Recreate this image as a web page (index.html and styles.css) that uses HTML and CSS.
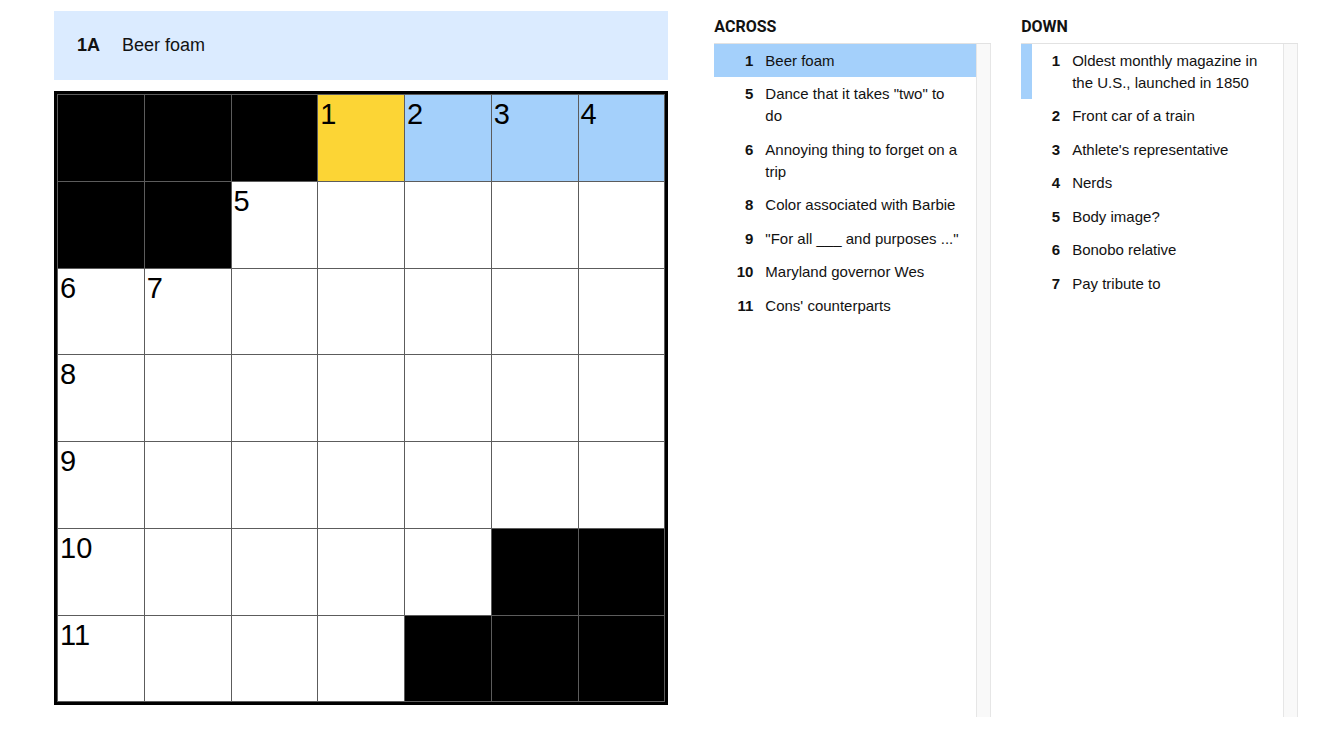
FILE: index.html
```
<!DOCTYPE html>
<html lang="en">
<head>
<meta charset="utf-8">
<meta name="viewport" content="width=device-width, initial-scale=1">
<title>Mini Crossword</title>
<link rel="stylesheet" href="styles.css">
</head>
<body>
<main class="game">
  <section class="puzzle">
    <div class="clue-bar"><span class="clue-bar-number">1A</span><span class="clue-bar-text">Beer foam</span></div>
    <div class="board">
      <div class="cell block"></div><div class="cell block"></div><div class="cell block"></div><button class="cell selected">1</button><button class="cell highlighted">2</button><button class="cell highlighted">3</button><button class="cell highlighted">4</button>
      <div class="cell block"></div><div class="cell block"></div><button class="cell">5</button><button class="cell"></button><button class="cell"></button><button class="cell"></button><button class="cell"></button>
      <button class="cell">6</button><button class="cell">7</button><button class="cell"></button><button class="cell"></button><button class="cell"></button><button class="cell"></button><button class="cell"></button>
      <button class="cell">8</button><button class="cell"></button><button class="cell"></button><button class="cell"></button><button class="cell"></button><button class="cell"></button><button class="cell"></button>
      <button class="cell">9</button><button class="cell"></button><button class="cell"></button><button class="cell"></button><button class="cell"></button><button class="cell"></button><button class="cell"></button>
      <button class="cell">10</button><button class="cell"></button><button class="cell"></button><button class="cell"></button><button class="cell"></button><div class="cell block"></div><div class="cell block"></div>
      <button class="cell">11</button><button class="cell"></button><button class="cell"></button><button class="cell"></button><div class="cell block"></div><div class="cell block"></div><div class="cell block"></div>
    </div>
  </section>
  <div class="lists">
    <section class="list">
      <h2 class="list-title">ACROSS</h2>
      <div class="list-body">
        <ol class="clues">
          <li class="clue current"><span class="number">1</span><span class="text">Beer foam</span></li>
          <li class="clue"><span class="number">5</span><span class="text">Dance that it takes "two" to do</span></li>
          <li class="clue"><span class="number">6</span><span class="text">Annoying thing to forget on a trip</span></li>
          <li class="clue"><span class="number">8</span><span class="text">Color associated with Barbie</span></li>
          <li class="clue"><span class="number">9</span><span class="text">"For all ___ and purposes ..."</span></li>
          <li class="clue"><span class="number">10</span><span class="text">Maryland governor Wes</span></li>
          <li class="clue"><span class="number">11</span><span class="text">Cons' counterparts</span></li>
        </ol>
        <div class="track"></div>
      </div>
    </section>
    <section class="list">
      <h2 class="list-title">DOWN</h2>
      <div class="list-body">
        <ol class="clues">
          <li class="clue crossing"><span class="number">1</span><span class="text">Oldest monthly magazine in the U.S., launched in 1850</span></li>
          <li class="clue"><span class="number">2</span><span class="text">Front car of a train</span></li>
          <li class="clue"><span class="number">3</span><span class="text">Athlete's representative</span></li>
          <li class="clue"><span class="number">4</span><span class="text">Nerds</span></li>
          <li class="clue"><span class="number">5</span><span class="text">Body image?</span></li>
          <li class="clue"><span class="number">6</span><span class="text">Bonobo relative</span></li>
          <li class="clue"><span class="number">7</span><span class="text">Pay tribute to</span></li>
        </ol>
        <div class="track"></div>
      </div>
    </section>
  </div>
</main>
</body>
</html>
```
FILE: styles.css
```
* {
  box-sizing: border-box;
}

body {
  margin: 0;
  background: #fff;
  color: #121212;
  font-family: "Liberation Sans", Arial, sans-serif;
  font-size: 15px;
  line-height: 22px;
}

.game {
  display: grid;
  grid-template-columns: 20fr 19fr;
  gap: 46px;
  min-height: 100vh;
  padding: 11px 40px 39px 54px;
}

.clue-bar {
  display: flex;
  align-items: center;
  height: 69px;
  margin-bottom: 11px;
  padding: 0 23px 2px;
  background: #dbebff;
  font-size: 18px;
}

.clue-bar-number {
  width: 45px;
  font-weight: 700;
}

.board {
  display: grid;
  grid-template-columns: repeat(7, 1fr);
  grid-template-rows: repeat(7, 1fr);
  gap: 1px;
  aspect-ratio: 1;
  padding: 1px;
  border: 3px solid #000;
  background: #5c5c5c;
}

.cell {
  display: flex;
  align-items: flex-start;
  min-width: 0;
  margin: 0;
  padding: 3px 2px;
  border: 0;
  border-radius: 0;
  background: #fff;
  color: #000;
  font-family: "Liberation Sans", Arial, sans-serif;
  font-size: 29px;
  line-height: 32px;
}

.block {
  background: #000;
}

.selected {
  background: #fcd535;
}

.highlighted {
  background: #a4d0fb;
}

.lists {
  display: grid;
  grid-template-columns: 1fr 1fr;
  gap: 30px;
}

.list {
  display: flex;
  flex-direction: column;
}

.list-title {
  margin: 0;
  padding: 5px 0;
  font-family: Roboto, sans-serif;
  font-size: 16px;
  font-weight: 700;
  line-height: 22px;
}

.list-body {
  display: flex;
  flex: 1;
  border-top: 1px solid #e2e2e2;
}

.clues {
  flex: 1;
  margin: 0;
  padding: 0;
  list-style: none;
}

.clue {
  display: flex;
  gap: 12px;
  padding: 6px 12px 5px 0;
}

.clue:nth-child(even) {
  padding-bottom: 6px;
}

.number {
  flex: none;
  width: 39px;
  font-weight: 700;
  text-align: right;
}

.current {
  background: #a4d0fb;
}

.crossing {
  border-left: 11px solid #a4d0fb;
}

.crossing .number {
  width: 28px;
}

.track {
  width: 15px;
  border: solid #e6e6e6;
  border-width: 0 1px;
  background: #f9f9f9;
}
```
